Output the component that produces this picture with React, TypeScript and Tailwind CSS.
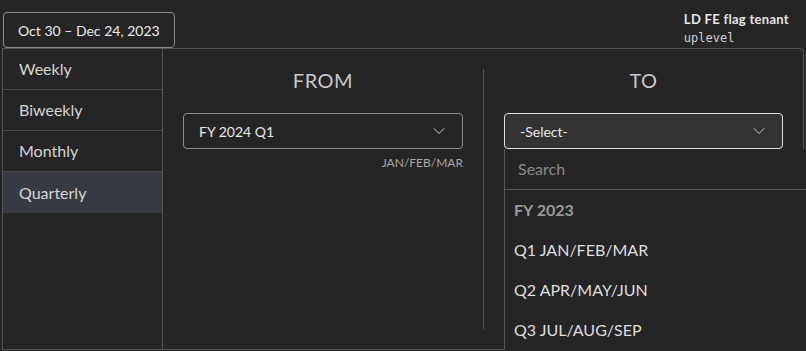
import { ChevronDown } from "lucide-react";

const ranges = ["Weekly", "Biweekly", "Monthly", "Quarterly"];
const quarters = ["Q1 JAN/FEB/MAR", "Q2 APR/MAY/JUN", "Q3 JUL/AUG/SEP"];

function Select({ label, active }: { label: string; active?: boolean }) {
  return (
    <div
      className={
        "flex h-[36px] items-center justify-between rounded-[4px] border pl-[15px] pr-[13px] text-[14px] " +
        (active ? "border-[#e0e0e0] bg-[#333333] text-[#e8e8e8]" : "border-[#8a8a8a] text-[#e8e8e8]")
      }
    >
      <span>{label}</span>
      <ChevronDown size={20} strokeWidth={1.25} className="text-[#a0a0a0]" />
    </div>
  );
}

export default function App() {
  return (
    <div
      className="relative h-[351px] w-[806px] overflow-hidden bg-[#252525] text-[#e0e0e0]"
      style={{ fontFamily: "Lato, 'Noto Sans', sans-serif" }}
    >
      {/* header */}
      <div className="flex h-[48px] items-start justify-between pl-[3px] pr-[17px] pt-[12px]">
        <button className="flex h-[36px] w-[172px] items-center rounded-[4px] border border-[#8a8a8a] pl-[14px] text-[14px] text-[#ececec]">
          Oct 30 – Dec 24, 2023
        </button>
        <div className="-mt-[2px] text-[13px] leading-[19px]">
          <div className="font-bold tracking-[0.3px] text-[#e6e6e6]">LD FE flag tenant</div>
          <div className="text-[12px] text-[#d0d0d0]" style={{ fontFamily: "'DejaVu Sans Mono', monospace" }}>
            uplevel
          </div>
        </div>
      </div>

      {/* popover */}
      <div className="ml-[2px] flex h-[302px] w-[802px] rounded-tr-[4px] border border-[#555]">
        <div className="w-[160px] border-r border-[#555]">
          {ranges.map((r, i) => (
            <div
              key={r}
              className={
                "flex h-[41px] items-center border-b border-[#4a4a4a] pl-[16px] text-[16px] " +
                (i === 3 ? "border-b-0 bg-[#373a42] text-[#d8d8d8]" : "text-[#d4d4d4]")
              }
            >
              {r}
            </div>
          ))}
        </div>

        <div className="flex w-[320px] flex-col px-[20px] pt-[16px]">
          <div className="text-center text-[20px] tracking-wide text-[#c8c8c8]">FROM</div>
          <div className="mt-[18px]">
            <Select label="FY 2024 Q1" />
          </div>
          <div className="mt-[5px] text-right text-[12px] text-[#a8a8a8]">JAN/FEB/MAR</div>
        </div>

        <div className="mb-[20px] mt-[20px] w-px bg-[#555]" />

        <div className="flex flex-1 flex-col px-[20px] pt-[16px]">
          <div className="text-center text-[20px] tracking-wide text-[#c8c8c8]">TO</div>
          <div className="mt-[18px]">
            <Select label="-Select-" active />
          </div>
        </div>
      </div>

      {/* open list */}
      <div className="absolute left-[504px] top-[149px] w-[320px] border-l border-[#555] bg-[#252525] text-[16px]">
        <div className="flex h-[41px] items-center border-b border-[#555] pl-[13px] text-[#8a8a8a]">Search</div>
        <div className="flex h-[40px] items-center pl-[9px] font-bold text-[#9a9a9a]">FY 2023</div>
        {quarters.map((q) => (
          <div key={q} className="flex h-[40px] items-center pl-[9px] text-[#dedede]">
            {q}
          </div>
        ))}
      </div>
    </div>
  );
}
